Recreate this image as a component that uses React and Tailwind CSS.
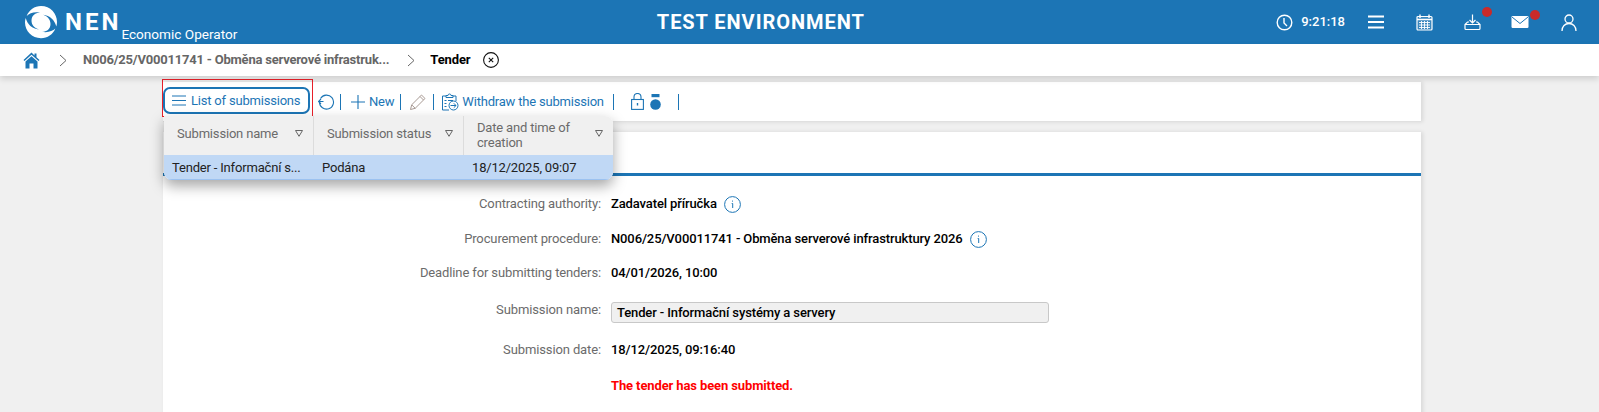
const BLUE = "#1c75b5";

function Logo() {
  return (
    <svg width="34" height="34" viewBox="0 0 34 34" fill="#fff">
      <path fillRule="evenodd" d="M17 1C26.5 1 33 8.5 33 17C33 18.5 32.8 20 32.3 21.5C30.5 15 26 10.500 19 9.800C24 11.500 26.500 15 26.500 19C26.500 24.500 22 27 18 26.800C24 28 28.500 26 31.300 23.500C29 29.500 23.500 33.200 17 33.200C8 33.200 1 26 1 17.500C1 16 1.200 14.500 1.700 13C3.500 19.500 8 23.800 15 24.500C10 23 7.500 19.500 7.500 15.500C7.500 10 12 7.500 16 7.700C10 6.500 5.500 8.500 2.700 11C5 5 10.500 1 17 1Z" />
    </svg>
  );
}
function Clock() {
  return (
    <svg width="17" height="17" viewBox="0 0 17 17" fill="none" stroke="#fff" strokeWidth="1.4">
      <circle cx="8.500" cy="8.500" r="7.300" /><path d="M8 4v5l3 3" />
    </svg>
  );
}
function Burger({ c = "#fff", w = 16, sw = 2, h = 14, g = 5.500 }) {
  return (
    <svg width={w} height={h} viewBox={`0 0 ${w} ${h}`} stroke={c} strokeWidth={sw}>
      <path d={`M0 ${h / 2 - g}H${w}M0 ${h / 2}H${w}M0 ${h / 2 + g}H${w}`} />
    </svg>
  );
}
function Calendar() {
  return (
    <svg width="17" height="17" viewBox="0 0 17 17" fill="none" stroke="#fff">
      <rect x="1" y="2.500" width="15" height="13.500" rx="1" fill="#ffffff22" strokeWidth="1.200" />
      <path d="M4 0.500v3.500M13 0.500v3.500" strokeWidth="1.400" />
      <path d="M1 5.500h15" strokeWidth="1.500" />
      <path d="M3 8.500h11M3 11h11M3 13.500h11M5.500 7v8M8.500 7v8M11.500 7v8" strokeWidth="0.900" />
    </svg>
  );
}
function Download() {
  return (
    <svg width="17" height="17" viewBox="0 0 17 17" fill="none" stroke="#fff" strokeWidth="1.200">
      <path d="M8.500 0.500v8.500M5.500 6l3 3 3-3" />
      <path d="M5 8H3.500L1 10.500v4a1 1 0 0 0 1 1h13a1 1 0 0 0 1-1v-4L13.500 8H12M1 10.500h15" />
    </svg>
  );
}
function Mail() {
  return (
    <svg width="18" height="14" viewBox="0 0 18 14">
      <rect x="0.500" y="1" width="17" height="12" rx="1.200" fill="#fff" />
      <path d="M1 2l8 6.500L17 2" fill="none" stroke={BLUE} strokeWidth="1" />
    </svg>
  );
}
function User() {
  return (
    <svg width="16" height="17" viewBox="0 0 16 17" fill="none" stroke="#fff" strokeWidth="1.300">
      <circle cx="8" cy="5" r="4" /><path d="M1 17c0-4.500 3-7.500 7-7.500s7 3 7 7.500" />
    </svg>
  );
}
function Home() {
  return (
    <svg width="17" height="17" viewBox="0 0 17 17" fill={BLUE}>
      <path d="M8.500 0.500L0.500 8l1 1L8.500 2.800 15.500 9l1-1-3-2.800V1.500h-2v1.900z" />
      <path d="M2.500 9.500L8.500 4.200l6 5.300V16.500h-4v-5h-4v5h-4z" />
    </svg>
  );
}
function Chevron() {
  return (
    <svg width="8" height="13" viewBox="0 0 8 13" fill="none" stroke="#666" strokeWidth="1">
      <path d="M1 1l6 5.500L1 12" />
    </svg>
  );
}
function Close() {
  return (
    <svg width="16" height="16" viewBox="0 0 16 16" fill="none" stroke="#111">
      <circle cx="8" cy="8" r="7.400" strokeWidth="1.100" /><path d="M5.800 5.800l4.400 4.400M10.200 5.800l-4.400 4.400" strokeWidth="1.100" />
    </svg>
  );
}
function Refresh() {
  return (
    <svg width="17" height="17" viewBox="0 0 17 17" fill="none" stroke={BLUE} strokeWidth="1.100">
      <path d="M2.500 5.500A7 7 0 1 1 1.500 9" /><path d="M0.500 8.500h5M3 6l-2.500 2.500L3 11" />
    </svg>
  );
}
function Plus() {
  return (
    <svg width="14" height="14" viewBox="0 0 14 14" stroke={BLUE} strokeWidth="1.100"><path d="M7 0v14M0 7h14" /></svg>
  );
}
function Pencil() {
  return (
    <svg width="18" height="18" viewBox="0 0 18 18" fill="none" stroke="#a89a94" strokeWidth="1">
      <path d="M1.500 16.500l1.200-4.700L12.500 2l3.500 3.500-9.800 9.800zM2.700 11.800l3.500 3.500M11 3.500l3.500 3.500" />
    </svg>
  );
}
function Clip() {
  return (
    <svg width="18" height="18" viewBox="0 0 18 18" fill="none" stroke={BLUE} strokeWidth="1">
      <path d="M5 3H1.500v14H8M12 3h3v5" /><path d="M5 4.500V2.500h2a1.500 1.500 0 0 1 3 0h2v2z" />
      <path d="M3.500 7.500h2M3.500 10.500h2M3.500 13.500h2M7 7.500h5" />
      <circle cx="12.500" cy="12.500" r="4.500" /><path d="M9.500 12.500h5.500M12.800 10.300l2.200 2.200-2.200 2.200" />
    </svg>
  );
}
function Lock() {
  return (
    <svg width="13" height="17" viewBox="0 0 13 17" fill="none" stroke={BLUE} strokeWidth="1.100">
      <rect x="0.600" y="6.500" width="11.800" height="9.900" /><path d="M3 6.500V4a3.500 3.500 0 0 1 7 0v2.500" /><path d="M6.500 10v2.500" strokeWidth="1.400" />
    </svg>
  );
}
function Medal() {
  return (
    <svg width="11" height="16" viewBox="0 0 11 16" fill={BLUE}>
      <path d="M1.500 0h8v3.200h-8z" /><circle cx="5.500" cy="10.500" r="5.300" />
    </svg>
  );
}
function Info() {
  return (
    <svg width="17" height="17" viewBox="0 0 17 17" fill="none" stroke={BLUE}>
      <circle cx="8.500" cy="8.500" r="7.900" strokeWidth="1" /><path d="M7.700 7.500h1v4.500M8.500 4.600v1" strokeWidth="1" />
    </svg>
  );
}
function Filter() {
  return (
    <svg width="8" height="7" viewBox="0 0 8 7" fill="none" stroke="#666"><path d="M0.500 0.500h7L4 6.300z" /></svg>
  );
}
const Sep = ({ cls = "" }) => <div className={`w-px h-[16px] bg-[#1c75b5] shrink-0 ${cls}`} />;

function Row({ label, children, cls = "" }) {
  return (
    <div className={`flex items-center ${cls}`}>
      <div className="w-[448px] text-right text-[#6b6b6b] pr-[10px] shrink-0">{label}</div>
      <div className="flex items-center gap-[7px] font-medium text-black">{children}</div>
    </div>
  );
}

function Th({ children, w, last }) {
  return (
    <div className={`${w} shrink-0 h-full flex items-center justify-between pl-[13px] pb-[4px] text-[#6b6b6b] leading-[15px] ${last ? "pr-[10px]" : "pr-[10px] border-r border-[#dcdcdc]"}`}>
      <span>{children}</span><Filter />
    </div>
  );
}

export default function App() {
  return (
    <div className="h-[412px] w-full overflow-hidden bg-[#f0f0f0] text-[13px] tracking-[-0.12px] font-['Roboto',sans-serif] flex flex-col">
      <header className="h-[44px] shrink-0 bg-[#1c75b5] text-white flex items-center pl-[24px] pr-[22px] tracking-normal">
        <Logo />
        <div className="ml-[7px] text-[24px] leading-none font-bold tracking-[3px]">NEN</div>
        <div className="self-end text-[13.600px] leading-[16px] mb-[2px]">Economic Operator</div>
        <div className="flex-1 text-center text-[20px] font-bold tracking-[0.950px] pl-[8px]">TEST ENVIRONMENT</div>
        <div className="flex items-center">
          <Clock />
          <span className="ml-[8px] font-medium">9:21:18</span>
          <div className="ml-[23px]"><Burger /></div>
          <div className="ml-[32px]"><Calendar /></div>
          <div className="ml-[31px] relative"><Download /><span className="absolute -top-[7px] left-[18px] w-[10px] h-[10px] rounded-full bg-[#c92a2a]" /></div>
          <div className="ml-[30px] relative"><Mail /><span className="absolute -top-[5px] left-[19px] w-[10px] h-[10px] rounded-full bg-[#c92a2a]" /></div>
          <div className="ml-[32px]"><User /></div>
        </div>
      </header>

      <nav className="h-[32px] shrink-0 bg-white flex items-center pl-[23px] shadow-[0_3px_6px_rgba(0,0,0,0.14)] relative z-10">
        <Home />
        <div className="ml-[19px]"><Chevron /></div>
        <span className="ml-[16px] whitespace-nowrap font-bold text-[#666] tracking-[-0.21px]">N006/25/V00011741 - Obměna serverové infrastruk...</span>
        <div className="ml-[18px]"><Chevron /></div>
        <span className="ml-[15px] font-bold text-black">Tender</span>
        <div className="ml-[13px]"><Close /></div>
      </nav>

      <main className="pl-[163px] pt-[6px] relative flex-1">
        <div className="w-[1258px] h-[40px] bg-white border-b border-[#e0e0e0] shadow-[2px_0_4px_rgba(0,0,0,0.1)] flex items-center text-[#1c75b5] tracking-[-0.2px]">
          <div className="h-[27px] w-[147px] -mt-[2px] border-2 border-[#1c75b5] rounded-[7px] flex items-center pl-[7px] gap-[5px] shrink-0">
            <Burger c="#1c75b5" w={14} sw={1} h={11} g={4.500} />
            <span>List of submissions</span>
          </div>
          <div className="ml-[8px] flex items-center shrink-0"><Refresh /></div>
          <Sep cls="ml-[5px]" />
          <div className="ml-[10px]"><Plus /></div>
          <span className="ml-[4px]">New</span>
          <Sep cls="ml-[6px]" />
          <div className="ml-[8px]"><Pencil /></div>
          <Sep cls="ml-[6px]" />
          <div className="ml-[7px]"><Clip /></div>
          <span className="ml-[3px]">Withdraw the submission</span>
          <Sep cls="ml-[9px]" />
          <div className="ml-[17px]"><Lock /></div>
          <div className="ml-[6px]"><Medal /></div>
          <Sep cls="ml-[17px]" />
        </div>

        <div className="absolute left-[162px] top-[3px] w-[151px] h-[38px] border border-[#e8202a]" />

        <div className="absolute left-[164px] top-[40px] w-[449px] h-[64px] rounded-tr-[8px] rounded-b-[8px] overflow-hidden shadow-[0_6px_14px_rgba(0,0,0,0.35)] bg-white z-20 tracking-[-0.18px]">
          <div className="h-[39px] bg-[#f0f0f0] flex items-center">
            <Th w="w-[150px]">Submission name</Th>
            <Th w="w-[150px]">Submission status</Th>
            <Th w="w-[149px]" last><span className="block w-[105px] pt-[3px]">Date and time of creation</span></Th>
          </div>
          <div className="h-[25px] bg-[#c0d8f5] border-b border-[#9cc2f0] flex items-center text-[#222] pt-[2px]">
            <div className="w-[150px] pl-[8px] truncate">Tender - Informační s...</div>
            <div className="w-[150px] pl-[8px]">Podána</div>
            <div className="pl-[8px]">18/12/2025, 09:07</div>
          </div>
        </div>

        <section className="w-[1258px] mt-[10px] bg-white shadow-[2px_0_4px_rgba(0,0,0,0.1)] h-[400px]">
          <div className="h-[44px] border-b-[3px] border-[#1c75b5]" />
          <Row label="Contracting authority:" cls="mt-[19px] h-[18px]">Zadavatel příručka <Info /></Row>
          <Row label="Procurement procedure:" cls="mt-[17px] h-[18px]">N006/25/V00011741 - Obměna serverové infrastruktury 2026 <Info /></Row>
          <Row label="Deadline for submitting tenders:" cls="mt-[16px] h-[18px]">04/01/2026, 10:00</Row>
          <div className="flex mt-[20px]">
            <div className="w-[448px] text-right text-[#6b6b6b] pr-[10px] leading-[16px] shrink-0">Submission name:</div>
            <div className="w-[438px] h-[21px] bg-[#f0f0f0] border border-[#c8c8c8] rounded-[3px] pl-[5px] flex items-center font-medium text-black">Tender - Informační systémy a servery</div>
          </div>
          <Row label="Submission date:" cls="mt-[18px] h-[18px]">18/12/2025, 09:16:40</Row>
          <Row label="" cls="mt-[18px] h-[18px]"><span className="text-[#ff0000] font-bold">The tender has been submitted.</span></Row>
        </section>
      </main>
    </div>
  );
}
